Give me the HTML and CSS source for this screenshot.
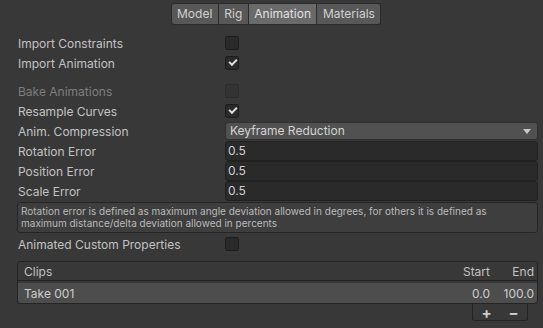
FILE: index.html
```html
<!DOCTYPE html>
<html lang="en">
<head>
    <meta charset="UTF-8">
    <title>Animation Import Settings</title>
    <link rel="stylesheet" href="styles.css">
</head>
<body>

<div class="tabs">
    <div class="tab">Model</div>
    <div class="tab">Rig</div>
    <div class="tab active">Animation</div>
    <div class="tab">Materials</div>
</div>

<div class="fields">
    <div class="row">
        <span class="label">Import Constraints</span>
        <span class="check"></span>
    </div>
    <div class="row">
        <span class="label">Import Animation</span>
        <span class="check on"></span>
    </div>

    <div class="row spaced disabled">
        <span class="label">Bake Animations</span>
        <span class="check"></span>
    </div>
    <div class="row">
        <span class="label">Resample Curves</span>
        <span class="check on"></span>
    </div>
    <div class="row">
        <span class="label">Anim. Compression</span>
        <div class="dropdown">Keyframe Reduction<span class="arrow"></span></div>
    </div>
    <div class="row">
        <span class="label">Rotation Error</span>
        <div class="input">0.5</div>
    </div>
    <div class="row">
        <span class="label">Position Error</span>
        <div class="input">0.5</div>
    </div>
    <div class="row">
        <span class="label">Scale Error</span>
        <div class="input">0.5</div>
    </div>

    <div class="help">Rotation error is defined as maximum angle deviation allowed in degrees, for others it is defined as maximum distance/delta deviation allowed in percents</div>

    <div class="row">
        <span class="label">Animated Custom Properties</span>
        <span class="check"></span>
    </div>
</div>

<div class="clips">
    <div class="clips-head">
        <span class="name">Clips</span>
        <span class="num start">Start</span>
        <span class="num end">End</span>
    </div>
    <div class="clip-row">
        <span class="name">Take 001</span>
        <span class="num start">0.0</span>
        <span class="num end">100.0</span>
    </div>
</div>
<div class="clip-buttons">
    <span class="btn">+</span>
    <span class="btn">&minus;</span>
</div>

</body>
</html>
```

FILE: styles.css
```css
body {
    margin: 0;
    background: #383838;
    color: #c2c2c2;
    font-family: Inter, "Noto Sans", sans-serif;
    font-size: 12px;
    width: 543px;
    height: 328px;
    overflow: hidden;
}
.tabs {
    display: flex;
    justify-content: center;
    padding-top: 3px;
    padding-left: 9px;
}
.tab {
    height: 20px;
    line-height: 20px;
    padding: 0 5.5px;
    background: #585858;
    border: 1px solid #2b2b2b;
    border-left: none;
    color: #d0d0d0;
}
.tab:first-child {
    border-left: 1px solid #2b2b2b;
    border-radius: 3px 0 0 3px;
}
.tab:last-child {
    border-radius: 0 3px 3px 0;
}
.tab.active {
    background: #6a6a6a;
    color: #e0e0e0;
}
.fields {
    padding: 8px 5px 0 17px;
}
.row {
    display: flex;
    align-items: center;
    height: 20px;
}
.row.spaced {
    margin-top: 8px;
}
.label {
    width: 207px;
    padding-left: 1px;
    flex-shrink: 0;
}
.disabled .label {
    color: #7e7e7e;
}
.check {
    width: 12px;
    height: 12px;
    background: #2a2a2a;
    border: 1px solid #1c1c1c;
    border-radius: 2px;
    position: relative;
}
.disabled .check {
    background: #333;
    border-color: #2c2c2c;
}
.check.on::after {
    content: "";
    position: absolute;
    left: 3px;
    top: 2px;
    width: 6px;
    height: 3px;
    border-left: 2px solid #e0e0e0;
    border-bottom: 2px solid #e0e0e0;
    transform: rotate(-45deg);
}
.dropdown {
    flex: 1;
    height: 16px;
    line-height: 16px;
    padding: 0 4px;
    background: #515151;
    border: 1px solid #303030;
    border-radius: 3px;
    color: #d4d4d4;
    display: flex;
    justify-content: space-between;
    align-items: center;
}
.arrow {
    width: 0;
    height: 0;
    border-left: 4px solid transparent;
    border-right: 4px solid transparent;
    border-top: 5px solid #c8c8c8;
    margin-right: 2px;
}
.input {
    flex: 1;
    height: 18px;
    line-height: 18px;
    padding: 0 2px;
    background: #2a2a2a;
    border: 1px solid #212121;
    border-radius: 3px;
    color: #d0d0d0;
}
.help {
    margin: 1px 0 1px 0;
    padding: 2px 3px 3px 3px;
    background: #3e3e3e;
    border: 1px solid #252525;
    border-radius: 3px;
    font-size: 10px;
    line-height: 12px;
    color: #bababa;
}
.clips {
    margin: 7px 5px 0 17px;
    border: 1px solid #242424;
    border-radius: 3px;
}
.clips-head, .clip-row {
    display: flex;
    align-items: center;
    padding: 0 3px 0 6px;
}
.clips-head {
    height: 18px;
    background: #383838;
    border-bottom: 1px solid #242424;
    border-radius: 3px 3px 0 0;
}
.clip-row {
    height: 20px;
    margin-top: 2px;
    background: #4d4d4d;
    color: #cccccc;
    border-radius: 0 0 3px 3px;
}
.name {
    flex: 1;
}
.num {
    text-align: right;
}
.start {
    width: 40px;
}
.end {
    width: 44px;
}
.clip-buttons {
    display: flex;
    justify-content: space-around;
    align-items: center;
    width: 54px;
    height: 16px;
    margin-left: 472px;
    background: #383838;
    border: 1px solid #242424;
    border-top: none;
    border-radius: 0 0 3px 3px;
    font-size: 15px;
    font-weight: bold;
    color: #cccccc;
}
```
